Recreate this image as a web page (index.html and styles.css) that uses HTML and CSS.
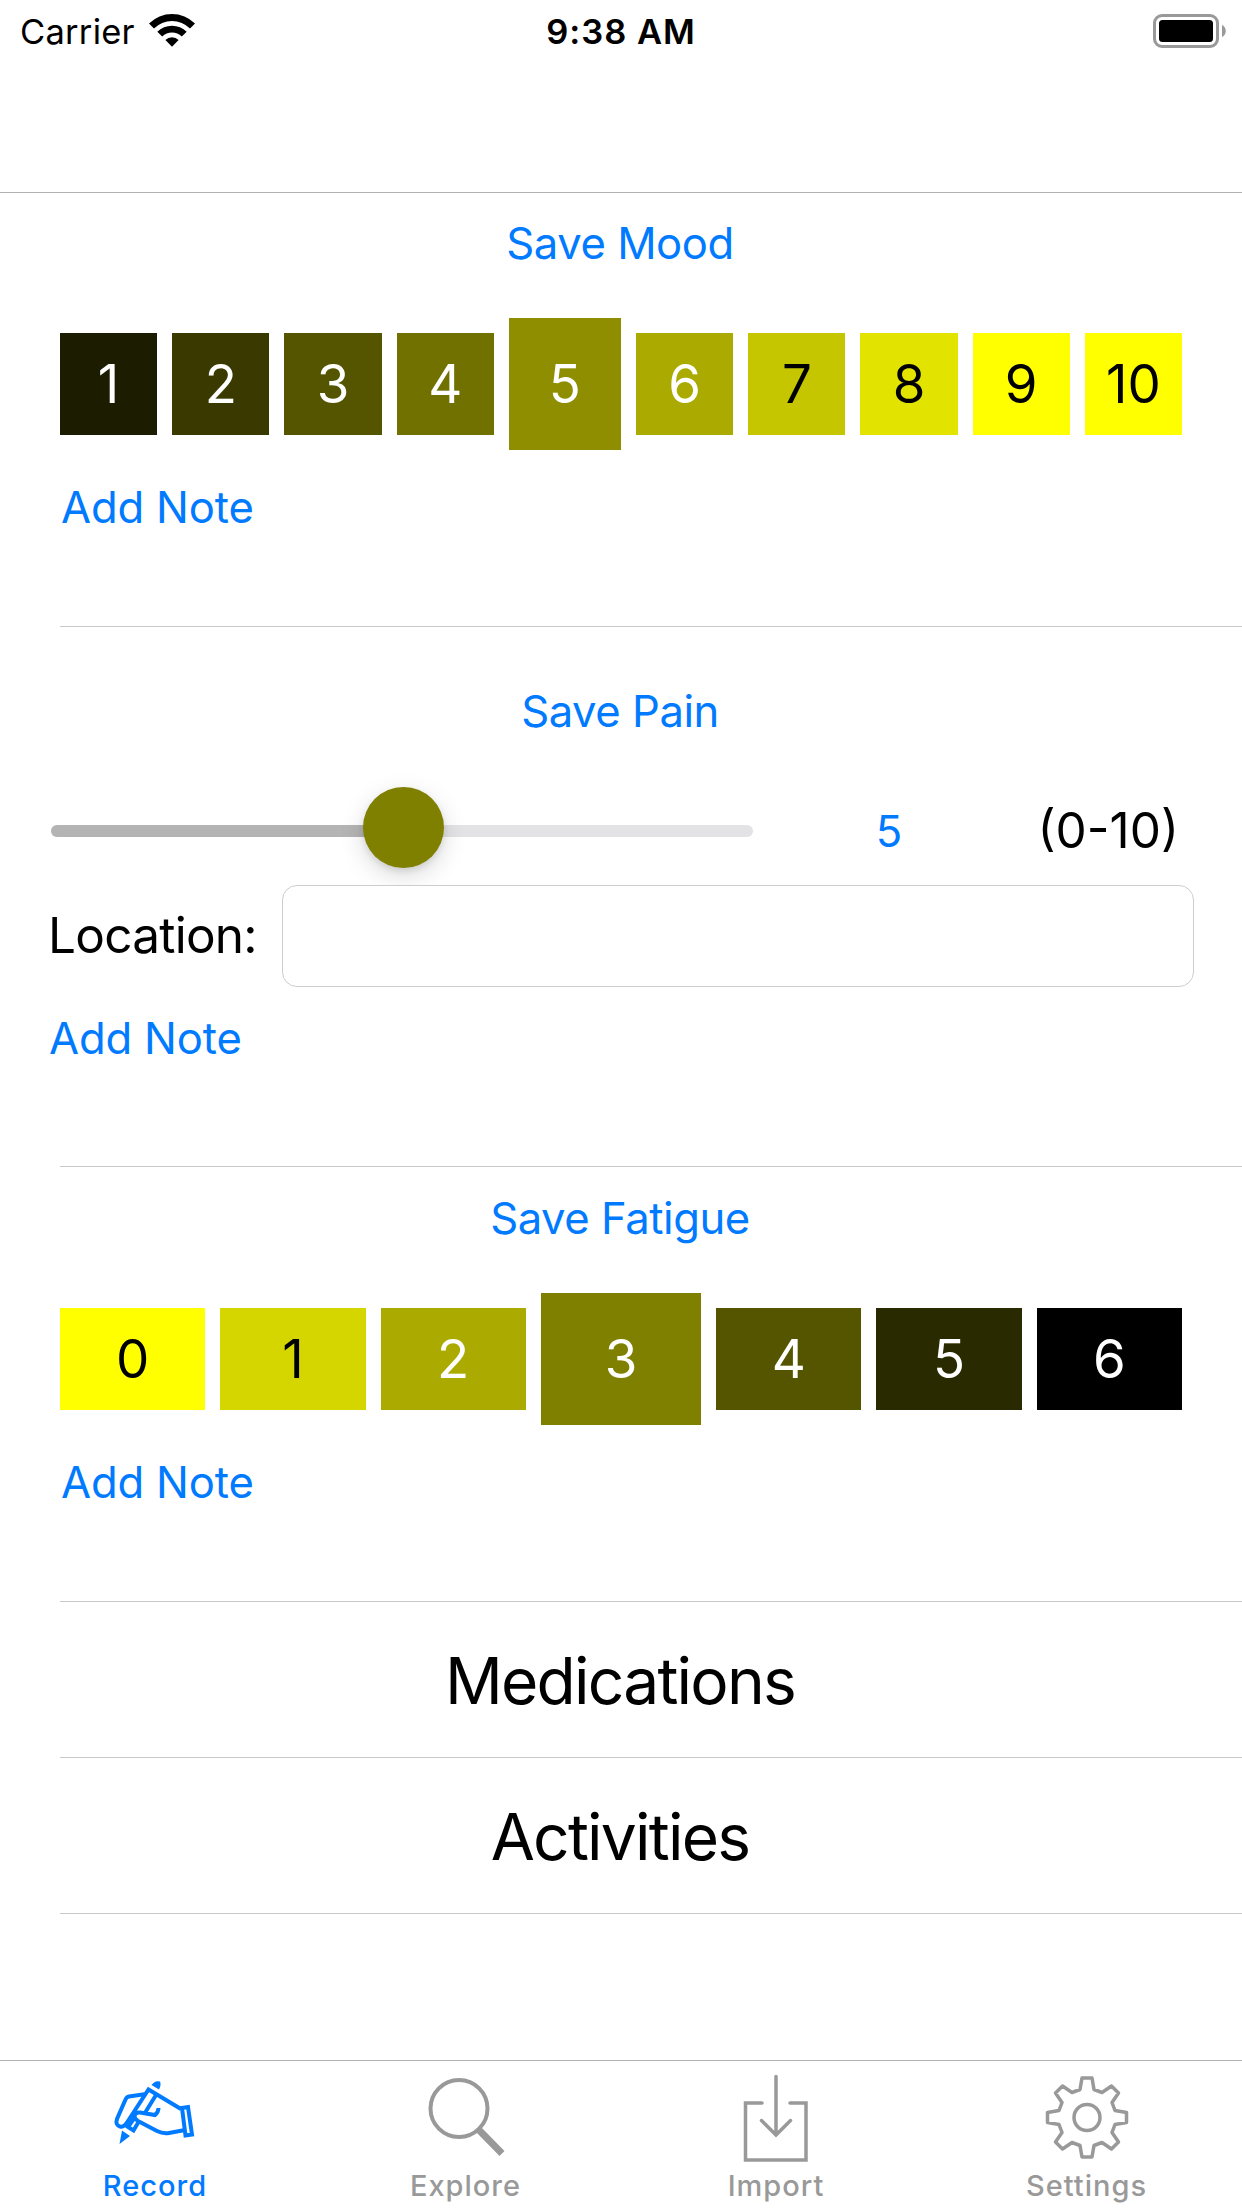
FILE: index.html
```html
<!DOCTYPE html>
<html lang="en">
<head>
<meta charset="utf-8">
<title>Record</title>
<link rel="stylesheet" href="styles.css">
</head>
<body>
<div class="screen">
  <header class="navbar">
    <div class="status">
      <div class="status-left">
        <span class="carrier">Carrier</span>
        <svg class="wifi" width="46" height="33" viewBox="0 0 46 33">
          <path d="M0 9.6A32.6 32.6 0 0 1 46 9.6L41 14.6A25.4 25.4 0 0 0 5 14.6Z"/>
          <path d="M8.3 17.8A20.8 20.8 0 0 1 37.7 17.8L32.8 22.6A13.9 13.9 0 0 0 13.2 22.6Z"/>
          <path d="M16.4 26A9.3 9.3 0 0 1 29.6 26L23 32.8Z"/>
        </svg>
      </div>
      <span class="clock">9:38 AM</span>
      <svg class="battery" width="74" height="34" viewBox="0 0 74 34">
        <rect x="1.5" y="1.5" width="63" height="31" rx="7.5" fill="none" stroke="#999" stroke-width="3"/>
        <rect x="6" y="6" width="54" height="22" rx="3.5"/>
        <path d="M69 11C74 13 74 21 69 23Z" fill="#999"/>
      </svg>
    </div>
  </header>

  <main class="list">
    <section class="cell mood">
      <button class="link save">Save Mood</button>
      <div class="scale">
        <div class="tile m1">1</div><div class="tile m2">2</div><div class="tile m3">3</div><div class="tile m4">4</div><div class="tile m5 selected">5</div><div class="tile m6">6</div><div class="tile m7 dark">7</div><div class="tile m8 dark">8</div><div class="tile m9 dark">9</div><div class="tile m10 dark">10</div>
      </div>
      <button class="link note">Add Note</button>
    </section>

    <section class="cell pain">
      <button class="link save">Save Pain</button>
      <div class="slider-row">
        <div class="slider"><div class="fill"></div><div class="thumb"></div></div>
        <span class="value">5</span>
        <span class="range">(0-10)</span>
      </div>
      <div class="location">
        <label class="label" for="place">Location:</label>
        <input class="field" id="place" type="text">
      </div>
      <button class="link note">Add Note</button>
    </section>

    <section class="cell fatigue">
      <button class="link save">Save Fatigue</button>
      <div class="scale">
        <div class="tile f0 dark">0</div><div class="tile f1 dark">1</div><div class="tile f2">2</div><div class="tile f3 selected">3</div><div class="tile f4">4</div><div class="tile f5">5</div><div class="tile f6">6</div>
      </div>
      <button class="link note">Add Note</button>
    </section>

    <div class="cell heading">Medications</div>
    <div class="cell heading">Activities</div>
  </main>

  <nav class="tabs">
    <a class="tab active">
      <svg class="icon" width="90" height="90" viewBox="0 0 90 90" fill="none" stroke="currentColor" stroke-width="4">
        <path d="M36 23L19 25.500Q16.500 26 15.500 28.500L7 48Q5 54 10 55.500Q14 56.500 17 51.500L38.500 18.500L71 38"/>
        <path d="M46 24L35.500 41M48.500 37Q48.500 41 45 44L30 41.500Q25 41 24.500 45Q24.500 48 28 50L47 60Q53 63 59 62L75 59"/>
        <path d="M25 46L18 56L23.500 59.500L28.500 51"/>
        <path d="M72 37L78 36L82 63.500L75.500 64.500Z"/>
        <path d="M41.500 14Q45 9 50 10.500Q51.500 14 49 18.500Z M12 59.500L20 65L9.500 73Z" fill="currentColor" stroke="none"/>
      </svg>
      <span class="tab-label">Record</span>
    </a>
    <a class="tab">
      <svg class="icon" width="90" height="90" viewBox="0 0 90 90" fill="none" stroke="currentColor" stroke-width="4">
        <circle cx="38" cy="37.500" r="28.500"/>
        <path d="M57.500 58.500L81 82.500" stroke-width="7"/>
      </svg>
      <span class="tab-label">Explore</span>
    </a>
    <a class="tab">
      <svg class="icon" width="90" height="90" viewBox="0 0 90 90" fill="none" stroke="currentColor" stroke-width="3.500" stroke-linecap="round">
        <path d="M31 32H14.500V89H75V32H59M45 5.500V64M30.500 49.500L45 64L59.500 49.500"/>
      </svg>
      <span class="tab-label">Import</span>
    </a>
    <a class="tab">
      <svg class="icon" width="90" height="90" viewBox="0 0 90 90" fill="none" stroke="currentColor" stroke-width="3.500" stroke-linejoin="round">
        <circle cx="45" cy="46.500" r="13"/>
        <path d="M40 7H50L52 18.500L60 21.500L69.500 15L76.500 22L70 31.500L73 39.500L84.500 41.500V51.500L73 53.500L70 61.500L76.500 71L69.500 78L60 71.500L52 74.500L50 86H40L38 74.500L30 71.500L20.500 78L13.500 71L20 61.500L17 53.500L5.500 51.500V41.500L17 39.500L20 31.500L13.500 22L20.500 15L30 21.500L38 18.500Z"/>
      </svg>
      <span class="tab-label">Settings</span>
    </a>
  </nav>
</div>
</body>
</html>
```
FILE: styles.css
```css
* { box-sizing: border-box; }
body { margin: 0; background: #fff; }
.screen {
  width: 1242px; height: 2208px;
  display: flex; flex-direction: column;
  overflow: hidden;
  color: #000;
  font-family: Inter, "Liberation Sans", sans-serif;
}
.navbar { height: 193px; border-bottom: 1px solid #b2b2b2; }
.status {
  display: grid; grid-template-columns: 1fr auto 1fr; align-items: center;
  height: 60px; padding: 0 20px;
  font-size: 34.5px; line-height: 60px;
}
.status-left { display: flex; align-items: center; gap: 14px; letter-spacing: 0.25px; }
.carrier, .clock { padding-top: 2px; }
.wifi { margin-top: -2px; }
.clock { font-weight: 600; letter-spacing: 1px; }
.battery { justify-self: end; margin-right: -5px; }

.list { flex: 1; display: flex; flex-direction: column; }
.cell {
  display: flex; flex-direction: column;
  margin-left: 60px;
  border-bottom: 1px solid #c8c7cc;
}
.link {
  appearance: none; border: 0; padding: 0; background: none;
  color: #007aff;
  font: 400 43.6px/54px Inter, "Liberation Sans", sans-serif;
  letter-spacing: -0.45px;
}
.save { align-self: center; margin-right: 62px; }
.note { align-self: flex-start; margin-left: 1px; letter-spacing: -0.15px; }

.mood { height: 434px; padding-top: 24px; }
.fatigue { height: 435px; padding-top: 25px; }
.scale {
  display: flex; align-items: center; gap: 15px;
  width: 1122px; height: 132px; margin: 47px 0 31px;
}
.tile {
  flex: 1 1 0; height: 102px;
  font-size: 52.8px; line-height: 102px; text-align: center;
  color: #fff;
}
.tile.dark { color: #000; }
.tile.selected { flex-basis: 15px; height: 132px; line-height: 132px; }
.m1 { background: #1c1c00; }
.m2 { background: #393900; }
.m3 { background: #555500; }
.m4 { background: #717100; }
.m5 { background: #8e8e00; }
.m6 { background: #aaaa00; }
.m7 { background: #c6c600; }
.m8 { background: #e3e300; }
.m9, .m10, .f0 { background: #ffff00; }
.f1 { background: #d5d500; }
.f2 { background: #aaaa00; }
.f3 { background: #808000; }
.f4 { background: #555500; }
.f5 { background: #2a2a00; }
.f6 { background: #000; }

.pain { height: 540px; padding-top: 58px; }
.slider-row {
  display: grid; grid-template-columns: 702px 272px 148px; align-items: center;
  height: 90px; margin: 47px 0 0 -9px;
}
.slider { position: relative; height: 12px; border-radius: 6px; background: #e3e3e5; }
.fill { width: 50%; height: 12px; border-radius: 6px 0 0 6px; background: #b4b4b4; }
.thumb {
  position: absolute; left: 312px; top: -38px;
  width: 81px; height: 81px; border-radius: 50%;
  background: #808000;
  box-shadow: 0 8px 24px rgba(0, 0, 0, .15), 0 3px 6px rgba(0, 0, 0, .1);
}
.value { text-align: center; font-size: 43.6px; color: #007aff; }
.range { justify-self: end; margin-right: -6px; padding-bottom: 2px; font-size: 49.5px; letter-spacing: 0; }
.location { position: relative; display: flex; align-items: center; margin: 9px 48px 0 -12px; }
.label { width: 234px; padding-bottom: 2px; font-size: 49.5px; letter-spacing: -0.75px; }
.field {
  flex: 1; min-width: 0; height: 102px;
  border: 1px solid #cdcdcd; border-radius: 15px; background: #fff;
}
.pain .note { margin: 25px 0 0 -11px; }
.heading {
  height: 156px; padding-right: 62px;
  font-size: 64px; line-height: 158px; letter-spacing: -1.75px; text-align: center;
}

.tabs {
  display: grid; grid-template-columns: 310px 311px 310px 311px;
  height: 148px; border-top: 1px solid #b2b2b2;
  color: #999;
}
.tab { display: flex; flex-direction: column; align-items: center; padding-top: 10px; }
.tab.active { color: #007aff; }
.icon { overflow: visible; }
.tab-label { font-size: 29px; font-weight: 500; line-height: 36px; letter-spacing: 1px; margin-top: 7px; }
```
